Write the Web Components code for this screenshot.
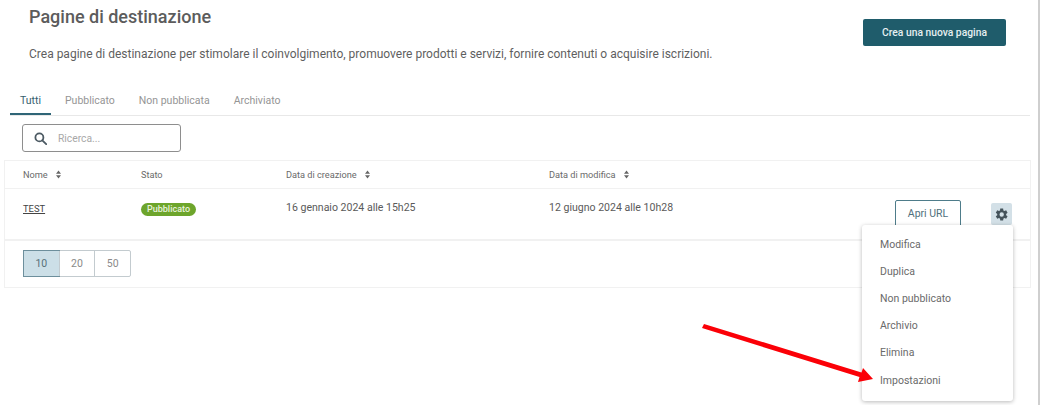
<!DOCTYPE html>
<html lang="it">
<head>
<meta charset="utf-8">
<title>Pagine di destinazione</title>
<style>
    html, body { margin: 0; padding: 0; background: #fff; }
    body { width: 1040px; height: 405px; overflow: hidden; position: relative; font-family: Roboto, "Liberation Sans", sans-serif; color: #555; }
</style>
</head>
<body>
<landing-page></landing-page>

<script>
(function() {
    'use strict';

    const sortIcon = `<svg width="5" height="9" viewBox="0 0 5 9" fill="#666"><path d="M2.500 .5L5 3.700H0zM2.500 8.500L0 5.300h5z"/></svg>`;
    const gearIcon = `<svg width="15" height="15" viewBox="0 0 24 24" fill="#44525a"><path fill-rule="evenodd" d="M19.400 13a7.600 7.600 0 0 0 0-2l2.300-1.800-2.300-3.900-2.700 1.100a7.600 7.600 0 0 0-1.700-1L14.600 2.500H10L9.600 5.400a7.600 7.600 0 0 0-1.700 1L5.200 5.300 2.900 9.200 5.200 11a7.600 7.600 0 0 0 0 2l-2.300 1.800 2.300 3.900 2.700-1.100a7.600 7.600 0 0 0 1.700 1l.4 2.900h4.600l.4-2.900a7.600 7.600 0 0 0 1.700-1l2.700 1.100 2.300-3.900zM12.300 15.500a3.500 3.500 0 1 1 0-7 3.500 3.500 0 0 1 0 7z"/></svg>`;

    class PageHeader extends HTMLElement {
        constructor() {
            super();
            this.attachShadow({mode: 'open'}).innerHTML = `
                <style>
                    :host { display: flex; justify-content: space-between; align-items: flex-start; height: 90px; padding: 0 34px 0 29px; }
                    h1 { margin: 7px 0 0; font-size: 18px; line-height: 20px; font-weight: 500; color: #5c5c5c; }
                    p { margin: 18px 0 0; font-size: 12px; line-height: 18px; color: #5f5f5f; }
                    button { margin-top: 19px; width: 143px; height: 27px; border: 0; border-radius: 2px; padding: 0; background: #1f5c6b; color: #e6eff1; font: 500 10.300px Roboto, sans-serif; }
                </style>
                <div>
                    <h1>${this.getAttribute('title')}</h1>
                    <p><slot></slot></p>
                </div>
                <button>${this.getAttribute('action')}</button>
            `;
        }
    }

    class TabBar extends HTMLElement {
        constructor() {
            super();
            let tabs = this.getAttribute('tabs').split('|');
            this.attachShadow({mode: 'open'}).innerHTML = `
                <style>
                    :host { display: flex; height: 25px; margin: 0 10px; border-bottom: 1px solid #e8e8e8; font-size: 10.500px; }
                    .tab { padding: 0 10px; height: 23px; line-height: 21px; margin-right: 4px; color: #959595; white-space: nowrap; }
                    .tab.active { color: #35606e; border-bottom: 2px solid #2f6577; }
                </style>
                ${tabs.map((t, i) => `<div class="tab ${i == 0 ? 'active' : ''}">${t}</div>`).join('')}
            `;
        }
    }

    class SearchBox extends HTMLElement {
        constructor() {
            super();
            this.attachShadow({mode: 'open'}).innerHTML = `
                <style>
                    :host { display: flex; align-items: center; gap: 11px; box-sizing: border-box; width: 159px; height: 28px; margin: 8px 0 8px 22px; padding-left: 11px; border: 1px solid #8e8e8e; border-radius: 3px; font-size: 10.300px; color: #a8a8a8; }
                    svg { display: block; }
                </style>
                <svg width="13" height="13" viewBox="0 0 13 13" fill="none" stroke="#4c5a63" stroke-width="1.800"><circle cx="5.400" cy="5.400" r="4"/><path d="M8.300 8.300l3.900 3.900" stroke-linecap="round"/></svg>
                <span>${this.getAttribute('placeholder')}</span>
            `;
        }
    }

    class SortHead extends HTMLElement {
        constructor() {
            super();
            this.attachShadow({mode: 'open'}).innerHTML = `
                <style>
                    :host { display: flex; align-items: center; gap: 8px; font-size: 9.200px; color: #6a6a6a; white-space: nowrap; }
                    span { display: inline-flex; }
                </style>
                <slot></slot>${this.hasAttribute('sortable') ? `<span>${sortIcon}</span>` : ''}
            `;
        }
    }

    class StatusBadge extends HTMLElement {
        constructor() {
            super();
            this.attachShadow({mode: 'open'}).innerHTML = `
                <style>
                    :host { display: inline-block; height: 13px; line-height: 12px; padding: 0 6px; border-radius: 7px; background: #6da52c; color: #e9f3dc; font-size: 9px; font-weight: 500; }
                </style>
                <slot></slot>
            `;
        }
    }

    class PageSize extends HTMLElement {
        constructor() {
            super();
            let sizes = this.getAttribute('sizes').split(',');
            this.attachShadow({mode: 'open'}).innerHTML = `
                <style>
                    :host { display: inline-flex; height: 27px; border: 1px solid #c3cbcf; border-radius: 2px; box-sizing: border-box; font-size: 10.500px; color: #8a8a8a; }
                    div { width: 34.670px; text-align: center; line-height: 25px; border-left: 1px solid #c3cbcf; }
                    div:first-of-type { border-left: 0; background: #ccdfe7; color: #587079; box-shadow: 0 0 0 1px #6d8f9c; }
                </style>
                ${sizes.map(s => `<div>${s}</div>`).join('')}
            `;
        }
    }

    class PagesTable extends HTMLElement {
        constructor() {
            super();
            this.attachShadow({mode: 'open'}).innerHTML = `
                <style>
                    :host { display: block; box-sizing: border-box; width: 1027px; margin-left: 4px; border: 1px solid #f1f1f1; }
                    .row { display: grid; grid-template-columns: 118px 145px 263px 346px 1fr; }
                    .head { height: 27px; align-items: center; padding-left: 18px; border-bottom: 1px solid #f1f1f1; }
                    .body { padding-left: 18px; border-bottom: 2px solid #f1f1f1; box-sizing: border-box; height: 52px; font-size: 10.550px; color: #5a5a5a; padding-top: 13px; }
                    a { color: #444; text-decoration: underline; font-size: 9.400px; line-height: 14px; }
                    .date { line-height: 14px; margin-top: -1px; }
                    .actions { display: flex; align-items: flex-start; gap: 30px; margin: -2px 0 0 0; }
                    .open { box-sizing: border-box; width: 66px; height: 27px; border: 1px solid #4e7c8a; border-radius: 2px; background: #fff; font: 10.500px/25px Roboto, sans-serif; color: #50707c; text-align: center; }
                    .gear { width: 21px; height: 22px; margin-top: 3px; background: #d3e0e7; border-radius: 2px; display: flex; align-items: center; justify-content: center; }
                    .foot { height: 46px; padding: 9px 0 0 18px; box-sizing: border-box; }
                </style>
                <div class="row head">
                    <sort-head sortable>Nome</sort-head>
                    <sort-head>Stato</sort-head>
                    <sort-head sortable>Data di creazione</sort-head>
                    <sort-head sortable>Data di modifica</sort-head>
                </div>
                <div class="row body">
                    <div><a>TEST</a></div>
                    <div><status-badge>Pubblicato</status-badge></div>
                    <div class="date">16 gennaio 2024 alle 15h25</div>
                    <div class="date">12 giugno 2024 alle 10h28</div>
                    <div class="actions">
                        <div class="open">Apri URL</div>
                        <div class="gear">${gearIcon}</div>
                    </div>
                </div>
                <div class="foot"><page-size sizes="10,20,50"></page-size></div>
            `;
        }
    }

    class ActionMenu extends HTMLElement {
        constructor() {
            super();
            let items = this.getAttribute('items').split('|');
            this.attachShadow({mode: 'open'}).innerHTML = `
                <style>
                    :host { position: absolute; left: 862px; top: 225px; width: 151px; height: 176px; box-sizing: border-box; padding: 5.700px 0 0 18px; background: #fff; border-radius: 3px; box-shadow: 0 1px 4px rgba(0,0,0,.28); font-size: 10.500px; color: #6a6a6a; }
                    div { height: 27.200px; line-height: 27px; white-space: nowrap; }
                </style>
                ${items.map(i => `<div>${i}</div>`).join('')}
            `;
        }
    }

    class LandingPage extends HTMLElement {
        constructor() {
            super();
            this.attachShadow({mode: 'open'}).innerHTML = `
                <style>
                    :host { display: block; width: 1040px; height: 405px; position: relative; }
                    .edge { position: absolute; left: 1038px; top: 0; width: 2px; height: 405px; background: #cfcfcf; }
                    .arrow { position: absolute; left: 0; top: 0; }
                </style>
                <page-header title="Pagine di destinazione" action="Crea una nuova pagina">Crea pagine di destinazione per stimolare il coinvolgimento, promuovere prodotti e servizi, fornire contenuti o acquisire iscrizioni.</page-header>
                <tab-bar tabs="Tutti|Pubblicato|Non pubblicata|Archiviato"></tab-bar>
                <search-box placeholder="Ricerca..."></search-box>
                <pages-table></pages-table>
                <action-menu items="Modifica|Duplica|Non pubblicato|Archivio|Elimina|Impostazioni"></action-menu>
                <svg class="arrow" width="1040" height="405" fill="#fb0007"><path d="M704 324L861.500 372.500 863 368 873 379 858 382 859.500 377 702 328z"/></svg>
                <div class="edge"></div>
            `;
        }
    }

    customElements.define('page-header', PageHeader);
    customElements.define('tab-bar', TabBar);
    customElements.define('search-box', SearchBox);
    customElements.define('sort-head', SortHead);
    customElements.define('status-badge', StatusBadge);
    customElements.define('page-size', PageSize);
    customElements.define('pages-table', PagesTable);
    customElements.define('action-menu', ActionMenu);
    customElements.define('landing-page', LandingPage);
})();
</script>
</body>
</html>
